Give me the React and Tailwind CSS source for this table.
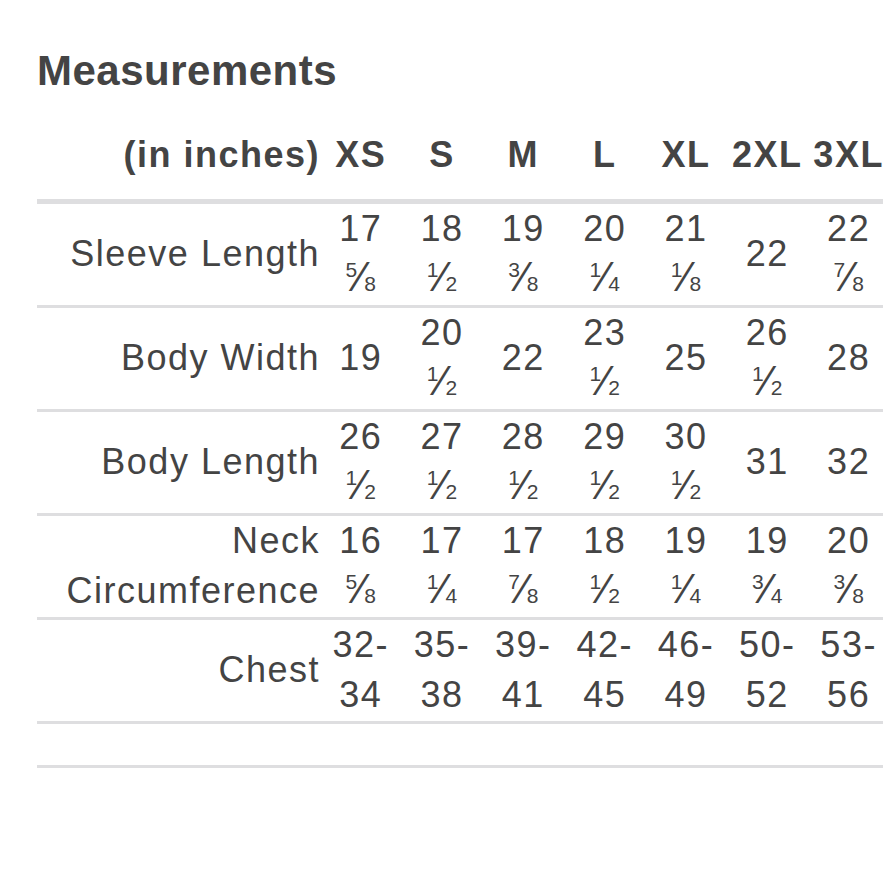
import React from 'react'

const sizes = ['XS', 'S', 'M', 'L', 'XL', '2XL', '3XL']

const fracs = {
  '⅝': ['5', '8'],
  '½': ['1', '2'],
  '⅜': ['3', '8'],
  '¼': ['1', '4'],
  '⅛': ['1', '8'],
  '⅞': ['7', '8'],
  '¾': ['3', '4'],
}

const rows = [
  {
    label: ['Sleeve Length'],
    values: [['17', '⅝'], ['18', '½'], ['19', '⅜'], ['20', '¼'], ['21', '⅛'], ['22'], ['22', '⅞']],
  },
  {
    label: ['Body Width'],
    values: [['19'], ['20', '½'], ['22'], ['23', '½'], ['25'], ['26', '½'], ['28']],
  },
  {
    label: ['Body Length'],
    values: [['26', '½'], ['27', '½'], ['28', '½'], ['29', '½'], ['30', '½'], ['31'], ['32']],
  },
  {
    label: ['Neck', 'Circumference'],
    values: [['16', '⅝'], ['17', '¼'], ['17', '⅞'], ['18', '½'], ['19', '¼'], ['19', '¾'], ['20', '⅜']],
  },
  {
    label: ['Chest'],
    values: [['32-', '34'], ['35-', '38'], ['39-', '41'], ['42-', '45'], ['46-', '49'], ['50-', '52'], ['53-', '56']],
  },
]

const Fraction = ({ char }) => {
  const [num, den] = fracs[char]
  return (
    <span className="tracking-normal whitespace-nowrap" title={char}>
      <span className="text-[21px] leading-none align-[14px]">{num}</span>
      <span className="text-[42px] leading-none font-light">⁄</span>
      <span className="text-[21px] leading-none">{den}</span>
    </span>
  )
}

const Lines = ({ lines }) => (
  <>
    {lines.map((line, i) => (
      <span key={i} className="block whitespace-nowrap">
        {fracs[line] ? <Fraction char={line} /> : line}
      </span>
    ))}
  </>
)

const App = () => {
  return (
    <div
      className="w-[883px] h-[876px] overflow-hidden bg-white text-[#444444]"
      style={{ fontFamily: '"Liberation Sans", Arial, Helvetica, sans-serif' }}
    >
      <div className="pl-[37px] pt-[47px]">
        <h1 className="text-[42px] leading-[48px] font-bold tracking-[0.5px]">Measurements</h1>

        <div className="mt-[35px] w-[852px] text-[36px] leading-[50.5px] tracking-[1.5px]">
          <div className="grid grid-cols-[283px_repeat(7,81.33px)] pb-[18px] border-b-[5px] border-[#dedee0] font-bold">
            <div className="text-right whitespace-nowrap">(in inches)</div>
            {sizes.map((s) => (
              <div key={s} className="text-center">
                {s}
              </div>
            ))}
          </div>

          {rows.map((row) => (
            <div
              key={row.label.join(' ')}
              className="grid grid-cols-[283px_repeat(7,81.33px)] h-[104px] border-b-[3px] border-[#dedee0]"
            >
              <div className="flex flex-col justify-center text-right">
                <Lines lines={row.label} />
              </div>
              {row.values.map((v, i) => (
                <div key={i} className="flex flex-col justify-center text-center">
                  <Lines lines={v} />
                </div>
              ))}
            </div>
          ))}

          <div className="h-[44px] border-b-[3px] border-[#dedee0]" />
        </div>
      </div>
    </div>
  )
}

export default App
